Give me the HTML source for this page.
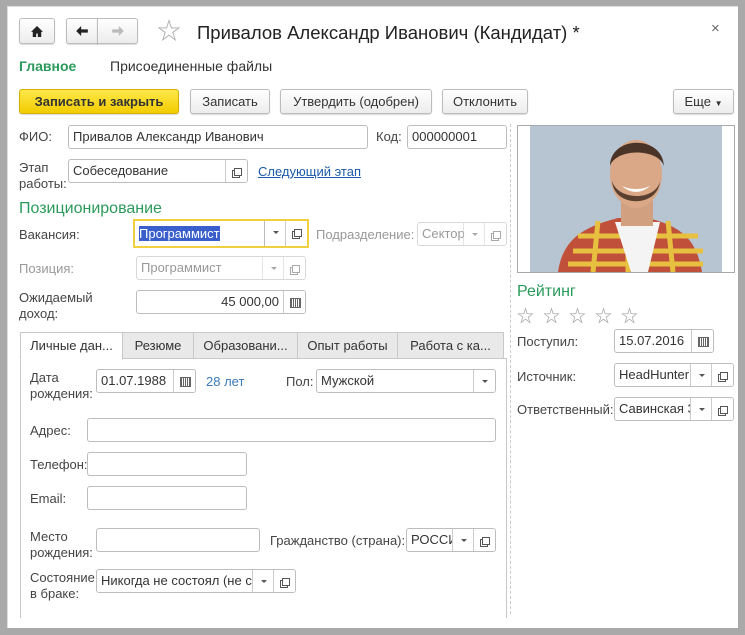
<!DOCTYPE html>
<html><head><meta charset="utf-8"><style>
*{box-sizing:border-box;margin:0;padding:0}
body{width:745px;height:635px;overflow:hidden;background:#fff;font-family:"Liberation Sans","Noto Sans CJK SC",sans-serif;font-size:13px;color:#333;position:relative}
.a{position:absolute}
.frame{position:absolute;left:0;top:0;width:745px;height:635px;border-left:7px solid #a9a9a9;border-top:6px solid #a9a9a9;border-right:7px solid #a9a9a9;border-bottom:7px solid #a9a9a9;box-shadow:inset 1px 1px 0 #ddd}
.btn{position:absolute;height:25px;border:1px solid #bcbcbc;border-radius:3px;background:linear-gradient(#fff,#ececec);text-align:center;line-height:23px;font-size:13px;color:#333;box-shadow:0 1px 1px rgba(0,0,0,.15)}
.in{position:absolute;height:24px;border:1px solid #bdbdbd;border-radius:3px;background:#fff;line-height:22px;padding-left:4px;font-size:13px;color:#333;overflow:hidden;white-space:nowrap}
.dis{color:#999;border-color:#d8d8d8}
.lbl{position:absolute;font-size:13px;color:#444;line-height:16px}
.g{color:#999}
.sq{position:absolute;top:0;bottom:0;width:22px;border-left:1px solid #ccc;background:#fff}
.dd:after{content:"";position:absolute;left:8px;top:10px;border:3px solid transparent;border-top:3px solid #555}
.op:after{content:"";position:absolute;left:8px;top:8px;width:6px;height:6px;border:1px solid #555;box-shadow:-2px 2px 0 -1px #fff,-2px 2px 0 0 #555}
.cal:after{content:"";position:absolute;left:6px;top:7px;width:9px;height:8px;border:1px solid #666;background:repeating-linear-gradient(90deg,#666 0 1px,#fff 1px 2px)}
.tab{position:absolute;top:332px;height:27px;border:1px solid #c8c8c8;background:#e9e9e9;line-height:26px;text-align:center;font-size:13px;color:#333}
.star{position:absolute;color:#999;font-size:17px}
</style></head><body>
<div class="frame"></div>
<div class="btn" style="left:19px;top:18px;width:36px;height:26px"><svg width="12" height="11" viewBox="0 0 14 13" style="margin-top:7px"><path d="M7 0L0 7h2v6h4V9h2v4h4V7h2z" fill="#222"/></svg></div>
<div class="btn" style="left:66px;top:18px;width:32px;height:26px;border-radius:3px 0 0 3px"><svg width="12" height="10" viewBox="0 0 14 12" style="margin-top:7px"><path d="M0 6L6 0v4h8v4H6v4z" fill="#222"/></svg></div>
<div class="btn" style="left:97px;top:18px;width:41px;height:26px;border-radius:0 3px 3px 0"><svg width="12" height="10" viewBox="0 0 14 12" style="margin-top:7px"><path d="M14 6L8 0v4H0v4h8v4z" fill="#bbb"/></svg></div>
<div class="a" style="left:157px;top:19px;font-size:24px;color:#aaa;line-height:26px">☆</div>
<div class="a" style="left:197px;top:22px;font-size:18.5px;color:#222">Привалов Александр Иванович (Кандидат) *</div>
<div class="a" style="left:711px;top:20px;font-size:15px;color:#666">×</div>
<div class="a" style="left:19px;top:58px;font-size:14px;color:#2a9a5a;font-weight:bold">Главное</div>
<div class="a" style="left:110px;top:58px;font-size:14px;color:#333">Присоединенные файлы</div>
<div class="btn" style="left:19px;top:89px;width:160px;background:linear-gradient(#ffe84a,#f2cc00);border-color:#d4b000;font-weight:bold;color:#333">Записать и закрыть</div>
<div class="btn" style="left:190px;top:89px;width:80px">Записать</div>
<div class="btn" style="left:280px;top:89px;width:152px">Утвердить (одобрен)</div>
<div class="btn" style="left:442px;top:89px;width:86px">Отклонить</div>
<div class="btn" style="left:673px;top:89px;width:61px">Еще <span style="font-size:8px">▼</span></div>
<div class="a" style="left:510px;top:124px;height:490px;border-left:1px dashed #ccc"></div>
<div class="lbl" style="left:19px;top:129px">ФИО:</div>
<div class="in" style="left:68px;top:125px;width:300px">Привалов Александр Иванович</div>
<div class="lbl" style="left:376px;top:129px">Код:</div>
<div class="in" style="left:407px;top:125px;width:100px">000000001</div>
<div class="lbl" style="left:19px;top:160px">Этап<br>работы:</div>
<div class="in" style="left:68px;top:159px;width:180px">Собеседование<div class="sq op" style="right:0"></div></div>
<div class="a" style="left:258px;top:164px;color:#1a5aa8;text-decoration:underline;font-size:13px">Следующий этап</div>
<div class="a" style="left:19px;top:200px;font-size:16px;color:#2a9a5a">Позиционирование</div>
<div class="lbl" style="left:19px;top:227px">Вакансия:</div>
<div class="in" style="left:133px;top:219px;width:176px;height:29px;border:2px solid #f0d040;border-radius:0;line-height:25px"><span style="background:#3a5fcc;color:#fff">Программист</span><div class="sq dd" style="right:21px;border-left-color:#bbb"></div><div class="sq op" style="right:0"></div></div>
<div class="lbl g" style="left:316px;top:227px">Подразделение:</div>
<div class="in dis" style="left:417px;top:222px;width:90px">Сектор<div class="sq dd" style="right:21px;opacity:.5"></div><div class="sq op" style="right:0;opacity:.5"></div></div>
<div class="lbl g" style="left:19px;top:261px">Позиция:</div>
<div class="in dis" style="left:136px;top:256px;width:170px">Программист<div class="sq dd" style="right:21px;opacity:.5"></div><div class="sq op" style="right:0;opacity:.5"></div></div>
<div class="lbl" style="left:19px;top:290px">Ожидаемый<br>доход:</div>
<div class="in" style="left:136px;top:290px;width:170px;text-align:right;padding-right:26px">45 000,00<div class="sq cal" style="right:0"></div></div>
<div class="a" style="left:20px;top:358px;width:487px;height:260px;border:1px solid #c8c8c8;border-bottom:none"></div>
<div class="tab" style="left:20px;width:103px;background:#fff;border-bottom-color:#fff;height:28px">Личные дан...</div>
<div class="tab" style="left:122px;width:72px">Резюме</div>
<div class="tab" style="left:193px;width:105px">Образовани...</div>
<div class="tab" style="left:297px;width:101px">Опыт работы</div>
<div class="tab" style="left:397px;width:107px">Работа с ка...</div>
<div class="lbl" style="left:30px;top:370px">Дата<br>рождения:</div>
<div class="in" style="left:96px;top:369px;width:100px">01.07.1988<div class="sq cal" style="right:0"></div></div>
<div class="a" style="left:206px;top:374px;color:#3a7ab8">28 лет</div>
<div class="lbl" style="left:286px;top:374px">Пол:</div>
<div class="in" style="left:316px;top:369px;width:180px">Мужской<div class="sq dd" style="right:0"></div></div>
<div class="lbl" style="left:30px;top:423px">Адрес:</div>
<div class="in" style="left:87px;top:418px;width:409px"></div>
<div class="lbl" style="left:30px;top:457px">Телефон:</div>
<div class="in" style="left:87px;top:452px;width:160px"></div>
<div class="lbl" style="left:30px;top:491px">Email:</div>
<div class="in" style="left:87px;top:486px;width:160px"></div>
<div class="lbl" style="left:30px;top:529px">Место<br>рождения:</div>
<div class="in" style="left:96px;top:528px;width:164px"></div>
<div class="lbl" style="left:270px;top:533px">Гражданство (страна):</div>
<div class="in" style="left:406px;top:528px;width:90px">РОССИЯ<div class="sq dd" style="right:21px"></div><div class="sq op" style="right:0"></div></div>
<div class="lbl" style="left:30px;top:570px">Состояние<br>в браке:</div>
<div class="in" style="left:96px;top:569px;width:200px">Никогда не состоял (не со<div class="sq dd" style="right:21px"></div><div class="sq op" style="right:0"></div></div>
<div class="a" style="left:517px;top:125px;width:218px;height:148px;border:1px solid #aaa;overflow:hidden">
<svg width="216" height="146" viewBox="0 0 216 146">
<rect width="216" height="146" fill="#fff"/>
<rect x="12" width="192" height="146" fill="#b7c4d2"/>
<path d="M40 146 C45 110 70 100 100 92 L130 92 C160 100 178 110 184 146Z" fill="#c0503a"/>
<path d="M60 110 L180 110 M55 125 L185 125 M50 138 L185 138 M80 95 L75 146 M110 95 L110 146 M150 95 L155 146" stroke="#e8c040" stroke-width="5"/>
<path d="M97 96 L113 146 L130 146 L142 96Z" fill="#f4f4f4"/>
<rect x="103" y="60" width="32" height="40" fill="#d0a080"/>
<ellipse cx="118" cy="48" rx="26" ry="34" fill="#daa886"/>
<path d="M92 40 C92 10 144 8 146 40 C140 22 98 22 92 40Z" fill="#4a3428"/>
<path d="M94 55 C96 82 140 82 142 55 C138 75 100 75 94 55Z" fill="#5a4030"/>
<path d="M104 60 Q118 72 132 60 Q118 66 104 60Z" fill="#fff"/>
</svg></div>
<div class="a" style="left:517px;top:283px;font-size:16px;color:#2a9a5a">Рейтинг</div>
<div class="star" style="left:517px;top:302px">☆</div>
<div class="star" style="left:543px;top:302px">☆</div>
<div class="star" style="left:569px;top:302px">☆</div>
<div class="star" style="left:595px;top:302px">☆</div>
<div class="star" style="left:621px;top:302px">☆</div>
<div class="lbl" style="left:517px;top:334px">Поступил:</div>
<div class="in" style="left:614px;top:329px;width:100px">15.07.2016<div class="sq cal" style="right:0"></div></div>
<div class="lbl" style="left:517px;top:369px">Источник:</div>
<div class="in" style="left:614px;top:363px;width:120px">HeadHunter<div class="sq dd" style="right:21px"></div><div class="sq op" style="right:0"></div></div>
<div class="lbl" style="left:517px;top:402px">Ответственный:</div>
<div class="in" style="left:614px;top:397px;width:120px">Савинская Зоя<div class="sq dd" style="right:21px"></div><div class="sq op" style="right:0"></div></div>
</body></html>
